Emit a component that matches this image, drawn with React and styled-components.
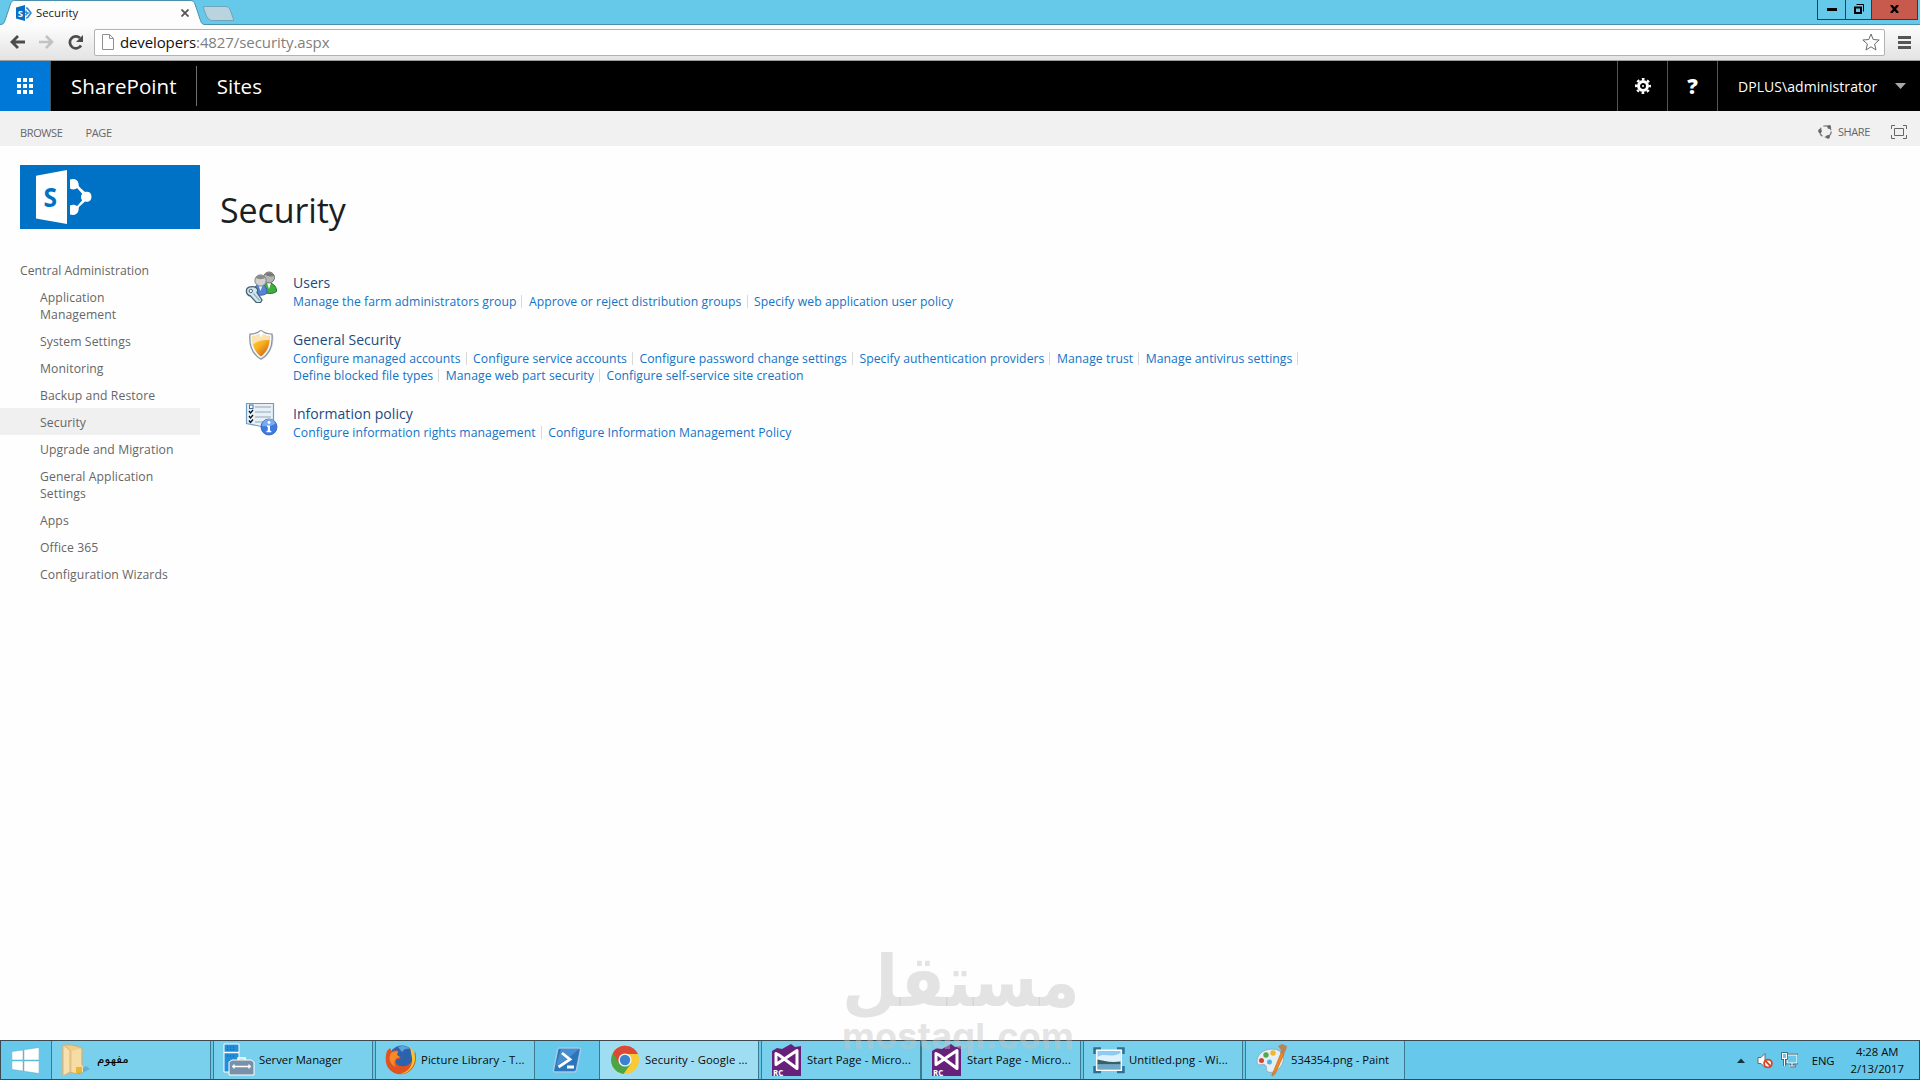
import React from "react";
import styled, { createGlobalStyle } from "styled-components";

const Global = createGlobalStyle`
  *, *::before, *::after { box-sizing: border-box; }
  body { margin: 0; overflow: hidden; background: #fefefe; }
  svg { display: block; flex: none; }
`;

const Screen = styled.div`
  display: flex;
  flex-direction: column;
  width: 1920px;
  height: 1080px;
  font-family: "Open Sans", "Noto Sans", sans-serif;
  white-space: nowrap;
`;

/* ---------- browser chrome ---------- */
const TitleBar = styled.header`
  display: flex;
  height: 25px;
  background: linear-gradient(#67c9ea 0 24px, #4b90ac 24px);
`;
const Tab = styled.div`
  display: grid;
  width: 205px;
  height: 25px;
  > * { grid-area: 1 / 1; }
`;
const TabContent = styled.div`
  display: flex;
  align-items: center;
  padding: 0 16px 0 16px;
`;
const TabTitle = styled.span`
  flex: 1;
  margin-left: 4px;
  padding-bottom: 1px;
  font-size: 11.3px;
  letter-spacing: 0.02px;
  color: #1a1a1a;
`;
const NewTab = styled.div`
  width: 27px;
  height: 15px;
  margin: 5.5px 0 0 0;
  border: 1px solid #6fa3b8;
  border-radius: 2px 4px 2px 5px;
  background: #b9d3df;
  transform: skewX(20deg);
`;
const WindowButtons = styled.div`
  display: flex;
  height: 20px;
  margin: 0 2px 0 auto;
  border: 1px solid #20414d;
  border-top: 0;
`;
const WindowButton = styled.div`
  display: flex;
  align-items: center;
  justify-content: center;
  width: ${(p) => p.$w}px;
  padding-bottom: 1px;
  background: ${(p) => (p.$close ? "#c75a4c" : "transparent")};
  & + & { border-left: 1px solid #20414d; }
`;
const Toolbar = styled.div`
  display: flex;
  align-items: center;
  height: 36px;
  padding: 0 9px 1px 10px;
  background: linear-gradient(#fdfdfd, #e3e3e3);
  border-bottom: 1px solid #9d9d9d;
`;
const NavIcons = styled.div`
  display: flex;
  gap: 14px;
  width: 84px;
`;
const AddressBar = styled.div`
  display: flex;
  align-items: center;
  flex: 1;
  height: 27px;
  margin-right: 13px;
  padding: 0 4px 0 7px;
  background: #fff;
  border: 1px solid #b2b2b2;
  border-radius: 2px;
  font-size: 15px;
`;
const Host = styled.span`
  margin-left: 6px;
  letter-spacing: -0.12px;
  color: #111;
`;
const Path = styled.span`
  flex: 1;
  letter-spacing: -0.08px;
  color: #808080;
`;

/* ---------- suite bar and ribbon ---------- */
const SuiteBar = styled.div`
  display: flex;
  align-items: center;
  height: 50px;
  background: #000;
  color: #fff;
`;
const Launcher = styled.div`
  display: grid;
  place-content: center;
  grid-template-columns: repeat(3, 4px);
  grid-auto-rows: 4px;
  gap: 2px;
  width: 51px;
  height: 50px;
  border-right: 1px solid #3f5568;
  background: #0078d7;
`;
const Dot = styled.i`
  background: #fff;
`;
const SuiteName = styled.span`
  padding: 0 19px 0 20px;
  font-size: 20.5px;
  letter-spacing: 0.08px;
`;
const SuiteDivider = styled.div`
  width: 1px;
  height: 40px;
  background: #6f6f6f;
`;
const SuiteActions = styled.div`
  display: flex;
  height: 50px;
  margin-left: auto;
`;
const SuiteAction = styled.div`
  display: flex;
  align-items: center;
  justify-content: center;
  width: 50px;
  padding-bottom: 1px;
  border-left: 1px solid #555;
  font-size: 21px;
  font-weight: 800;
`;
const Account = styled.div`
  display: flex;
  align-items: center;
  justify-content: space-between;
  width: 203px;
  padding: 0 14px 0 20px;
  border-left: 1px solid #555;
  font-size: 14px;
  letter-spacing: 0.06px;
`;
const Ribbon = styled.div`
  display: flex;
  height: 35px;
  padding: 14px 13px 0 20px;
  background: #f1f1f1;
  color: #666;
  font-size: 11px;
  line-height: 15px;
  letter-spacing: -0.38px;
`;
const RibbonTab = styled.span`
  margin-right: 23px;
`;
const RibbonActions = styled.div`
  display: flex;
  align-items: center;
  height: 15px;
  margin: -1px 0 0 auto;
`;
const ShareLabel = styled.span`
  margin: 0 21px 0 5px;
`;

/* ---------- page ---------- */
const Body = styled.div`
  display: flex;
  flex: 1;
  padding-top: 19px;
`;
const Side = styled.aside`
  width: 200px;
`;
const SiteLogo = styled.div`
  width: 180px;
  height: 64px;
  margin-left: 20px;
  background: #0072c6;
`;
const Nav = styled.nav`
  display: flex;
  flex-direction: column;
  margin-top: 27px;
`;
const NavItem = styled.a`
  padding: 6px 20px 4px ${(p) => (p.$root ? 20 : 40)}px;
  background: ${(p) => (p.$active ? "#f0f0f0" : "transparent")};
  font-size: 12.2px;
  line-height: 17px;
  letter-spacing: ${(p) => (p.$root ? 0.02 : 0.09)}px;
  color: #666;
  white-space: normal;
`;
const Main = styled.main`
  padding: 22px 0 0 20px;
`;
const Title = styled.h1`
  margin: 0 0 40px;
  font-size: 34px;
  font-weight: 400;
  line-height: 46px;
  letter-spacing: -0.1px;
  color: #1b1f24;
`;
const Section = styled.section`
  display: flex;
  gap: 15px;
  margin-bottom: 20px;
  padding-left: 25px;
`;
const SectionIcon = styled.div`
  height: 32px;
  margin-top: -2px;
`;
const SectionTitle = styled.h2`
  margin: 0;
  font-size: 14px;
  font-weight: 400;
  line-height: 20px;
  letter-spacing: 0.04px;
  color: #1a4a80;
`;
const LinkRow = styled.div`
  display: flex;
  height: 17px;
`;
const Link = styled.a`
  display: flex;
  align-items: center;
  font-size: 12.2px;
  line-height: 17px;
  letter-spacing: 0.06px;
  color: #1373c8;
`;
const Separator = styled.i`
  width: 1px;
  height: 13px;
  margin: 0 6.5px 0 5px;
  background: #d9d9d9;
`;

/* ---------- taskbar ---------- */
const Taskbar = styled.footer`
  display: flex;
  height: 40px;
  background: #66c8ea;
  border: 1px solid #3c4a50;
`;
const Start = styled.div`
  display: flex;
  align-items: center;
  width: 50px;
  padding-left: 11px;
`;
const Task = styled.div`
  display: flex;
  align-items: center;
  gap: 4px;
  width: ${(p) => p.$w || 160}px;
  margin-right: ${(p) => p.$gap || 0}px;
  padding-left: ${(p) => (p.$plain ? 16 : 9)}px;
  background: ${(p) => (p.$plain ? "transparent" : p.$active ? "#9fddf3" : "#78d0ec")};
  border: solid #3d7a90;
  border-width: 0 ${(p) => (p.$plain ? 0 : 1)}px;
`;
const TaskLabel = styled.span`
  padding-bottom: 2px;
  font-size: 11.3px;
  letter-spacing: ${(p) => p.$track ?? 0.1}px;
  color: #0a0a0a;
`;
const ArabicLabel = styled.span`
  padding-bottom: 2px;
  font: 12px "DejaVu Sans", sans-serif;
`;
const Tray = styled.div`
  display: flex;
  align-items: center;
  margin-left: auto;
  padding-right: 15px;
  font-size: 11.3px;
  color: #0a0a0a;
`;
const TrayIcon = styled.div`
  margin-right: ${(p) => p.$gap}px;
`;
const Language = styled.span`
  margin-right: 16px;
  letter-spacing: -0.1px;
`;
const Clock = styled.div`
  line-height: 17px;
  text-align: center;
`;

const Watermark = styled.div`
  position: absolute;
  left: 842px;
  top: 938px;
  width: 232px;
  color: rgba(195, 195, 195, 0.45);
  pointer-events: none;
  text-align: center;
`;
const WatermarkArabic = styled.div`
  height: 76px;
  font: bold 65px/86px "DejaVu Sans", sans-serif;
  transform: scaleY(1.1);
`;
const WatermarkLatin = styled.div`
  font: bold 36px/44px Inter, sans-serif;
  letter-spacing: 0.2px;
`;

/* ---------- drawings ---------- */
const PageGlyph = () => (
  <svg width="16" height="16" viewBox="0 0 16 16">
    <path d="M0 2.500 9 0v16l-9-2.500z" fill="#0a6fc2" />
    <path d="M10 3a2 2 0 0 1 2 1l3 4-3 4a2 2 0 0 1-2 1M10 5.500v2l2 .5-2 1.500v1" fill="none" stroke="#2a86cf" strokeWidth="1.500" />
    <text x="1.800" y="11.600" fontSize="9.500" fontWeight="700" fill="#fff">S</text>
  </svg>
);

const SharePointMark = () => (
  <svg width="180" height="64" viewBox="0 0 180 64">
    <path d="M16 10.700 47 5v54l-31-5.500z" fill="#fff" />
    <text x="23.500" y="41.500" fontSize="27" fontWeight="700" fill="#0072c6" textLength="13.500" lengthAdjust="spacingAndGlyphs">S</text>
    <path d="M50 14.500c4-1.500 8 0 8.500 4 .2 1.500 0 2.500 1.500 4l5 4.500c4-1 6.500 1 6.500 4.700s-3 6-6.500 4.700l-5.500 5c-1 1-.7 2.400-1 4-.9 4-4.500 5.300-8.500 4v-9c3-1.200 5.500-.8 7 .8l5-5.700c-1.300-2.200-1.200-5 0-7l-5-5.500c-2 1.800-4.500 1.800-7 .5z" fill="#fff" />
    <path d="M50 24.800c2.500 1.200 5 .9 7-.8l4.500 5c-1 2.200-1 4.400 0 6.400L57.200 40c-1.700-1.600-4.200-2-7.200-1" fill="#0072c6" />
  </svg>
);

const UsersIcon = () => (
  <svg width="33" height="32" viewBox="0 0 33 32">
    <path d="M17 20c1-6 4-8 7-8 5 0 8 5 7.500 8.500-3 2.500-10 3-14.500-.5z" fill="#3fae3b" stroke="#1f6f2b" />
    <path d="m22 12 2 6 2-6z" fill="#fff" />
    <circle cx="24" cy="6.500" r="5.500" fill="#b5b5b5" stroke="#707070" />
    <path d="M20 4c2-3 7-3 9 1-3 1-6 0-9-1z" fill="#777" />
    <path d="M9 22c0-7 3-9 6.500-9s6.500 3 6.500 9c-3 3-10 3-13 0z" fill="#5584d6" stroke="#3a60a8" />
    <path d="m13 13 2.500 7 2.500-7z" fill="#eaf2fb" />
    <circle cx="15.500" cy="9.500" r="5.600" fill="#d2d2d2" stroke="#808080" />
    <path d="M10.500 7c2-4 8-4 10 0-3 1.500-7 1.500-10 0z" fill="#8b8b8b" />
    <path d="M2 17.500c2-2.500 8-2.500 10 0 1 1.500.8 3 0 4l5 7.500-1.500 2.500-4 .2L5.500 25C2 24.500.5 21 2 17.500z" fill="#cfe5f2" stroke="#47616f" strokeWidth="1.300" />
    <path d="m8.500 22.500 6 7" stroke="#8fb0c2" strokeWidth="1.200" />
    <circle cx="5.800" cy="20" r="1.700" fill="#fff" stroke="#47616f" />
  </svg>
);

const ShieldIcon = () => (
  <svg width="33" height="32" viewBox="0 0 33 32">
    <defs>
      <linearGradient id="gold" x1="0" y1="0" x2=".7" y2="1">
        <stop offset="0" stopColor="#ffd23f" />
        <stop offset=".55" stopColor="#f8b21e" />
        <stop offset="1" stopColor="#d4661a" />
      </linearGradient>
    </defs>
    <path d="M17 4c3 2.500 7 3 11.500 3.500.8 10-2 18-11 24.500" fill="#ddd" opacity=".7" />
    <path d="M16 2.500c3.200 2.400 6.800 3.400 11 3.600C28 16 25 26 16 31.300 7 26 4 16 5 6.100c4.200-.2 7.800-1.200 11-3.600z" fill="#f4f6f8" stroke="#8795a3" strokeWidth="1.300" />
    <path d="M16 5.500c3 1.800 5.500 2.700 8.700 3C25 17 22.500 24 16 28.500 9.500 24 7 17 7.300 8.500c3-.3 5.700-1.200 8.700-3z" fill="url(#gold)" />
    <path d="M16 5.500c3 1.800 5.500 2.700 8.700 3v3.800c-6-1-12 .5-17.200 4.500C7.300 13 7.200 10 7.300 8.500c3-.3 5.700-1.200 8.700-3z" fill="#fbe3b5" />
    <path d="m13.800 4.500 2.200 5 2.200-5L16 3z" fill="#fff" />
  </svg>
);

const PolicyIcon = () => (
  <svg width="33" height="34" viewBox="0 0 33 34">
    <path d="M1.500 1.500h27V26L14 24 1.500 21.500z" fill="#e6f0f8" stroke="#6f9dcb" strokeWidth="1.200" />
    <path d="M10 5h16M10 10h16M10 15h16M10 20h9" stroke="#b3bec6" strokeWidth="1.300" />
    <rect x="4.500" y="3" width="3.500" height="3.500" fill="#fff" stroke="#3c6f9f" />
    <path d="m4 9 1.500 2L8 8M4 14l1.500 2L8 13M4 18.500l1.500 2 2.500-3" fill="none" stroke="#111" strokeWidth="1.300" />
    <circle cx="24" cy="25" r="8" fill="#3d7be0" stroke="#2c5fb8" strokeWidth=".8" />
    <path d="M17 24a7 7 0 0 1 13.500-2.500c-4 3-9 3-13.500 2.500z" fill="#7aa9ef" />
    <circle cx="24" cy="20.500" r="1.400" fill="#fff" />
    <path d="M22 23.500h3v5.300h1.300v1.400h-4.800v-1.400h1.300V25H22z" fill="#fff" />
  </svg>
);

const VisualStudio = () => (
  <svg width="32" height="34" viewBox="0 0 32 34">
    <path d="M1 8l5-3 5 1 9-5 4 3 6-1v30H1z" fill="#68217a" />
    <path d="M5 10.500v11L26 7.500v18L8 12z" fill="none" stroke="#fff" strokeWidth="3" strokeLinejoin="round" />
    <text x="2" y="33" fontSize="8" fontWeight="700" fill="#fff">RC</text>
  </svg>
);

const icons = {
  folder: (
    <svg width="32" height="34" viewBox="0 0 32 34">
      <path d="M14 31l11-8 4 3-10 5z" fill="#4d9fc0" opacity=".6" />
      <path d="M2 2h9l10 3v22l-5 4-8-2-6 3z" fill="#f0cf8d" stroke="#d9ad63" />
      <path d="M2 2l7 5v22l-7 4z" fill="#f8dfae" stroke="#dcb575" />
      <path d="M11 8l9-2v15l2 3v5l-5 1-6-1z" fill="#f6dda6" />
      <path d="M15 24h6v6h-6z" fill="#e8b73a" />
    </svg>
  ),
  server: (
    <svg width="32" height="34" viewBox="0 0 32 34">
      <path d="M1 1h15v28H1z" fill="#1f8fdc" stroke="#fff" />
      <path d="M1 9.500h15" stroke="#fff" strokeWidth="1.500" />
      <path d="M4 4h9M4 6.500h9M4 13h9" stroke="#0d5a9c" strokeDasharray="1 2" />
      <path d="M15 17v-2h7v2" fill="none" stroke="#fff" strokeWidth="1.500" />
      <path d="M6 19l3-2h19l3 2v13H6z" fill="#7890a8" stroke="#fff" />
      <path d="M9 23.500h19M11 21.500v4M26 21.500v4" stroke="#fff" strokeWidth="1.500" />
    </svg>
  ),
  firefox: (
    <svg width="32" height="32" viewBox="0 0 32 32">
      <circle cx="17" cy="14.500" r="13" fill="#2d62ad" />
      <path d="M13 3c5-2 9-1 12 2-4-1-6 0-8 3z" fill="#5ba4dc" />
      <path d="M2 7c-2 6-2 13 2 18 6 7 17 7 23 0 4-5 5-11 3-18-1 8-4 14-10 15-6 1-10-2-9-6l5-2-4-3 1-4C9 6 8 7 7 8L5 4z" fill="#e0521f" />
      <path d="M25 3c5 4 7 12 3 19-3 5-8 8-13 8 8-2 13-8 12-16z" fill="#f9c22e" />
      <path d="M7 8c-2 2-3 5-2 9 1 3 3 5 6 6-3-4-1-8 1-9l3-1-3-2 1-4z" fill="#f58a2c" />
    </svg>
  ),
  powershell: (
    <svg width="32" height="28" viewBox="0 0 32 28">
      <path d="M8 2h20q2 0 1.500 2l-4 20q-.5 2-2.500 2H4q-2 0-1.500-2l4-20Q7 2 8 2z" fill="#2a76bd" stroke="#a5c9e4" strokeWidth="1.500" />
      <path d="M10 3h18L15 14 5 20z" fill="#5ba0d8" opacity=".6" />
      <path d="m11 7 8 6.500L7.500 21M16 21h7" fill="none" stroke="#fff" strokeWidth="2.800" />
    </svg>
  ),
  chrome: (
    <svg width="32" height="32" viewBox="0 0 32 32">
      <circle cx="16" cy="16" r="14" fill="#fbc931" />
      <path d="M16 16 3.900 9A14 14 0 0 0 14.500 29.900L22 19.500z" fill="#4aa546" />
      <path d="M16 16 5 7.300A14 14 0 0 1 28.800 10H16z" fill="#db4a37" />
      <path d="M3.900 9 10 19l6-9h12.800A14 14 0 0 0 5 7.300z" fill="#db4a37" />
      <circle cx="16" cy="16" r="6.600" fill="#f2f2f2" />
      <circle cx="16" cy="16" r="5.200" fill="#3a83d0" />
    </svg>
  ),
  vs: <VisualStudio />,
  picture: (
    <svg width="32" height="28" viewBox="0 0 32 28">
      <path d="M1.500 8V2.500H8M24 2.500h6.500V8M30.500 20v6H24M8 26H1.500v-6" fill="none" stroke="#2f6f94" strokeWidth="2.500" />
      <path d="M3 3.500h26v21.500H3z" fill="#fff" />
      <path d="M4.500 5h23v18.500h-23z" fill="#8ccbf2" />
      <path d="M4.500 11c7-5 13 2 23-4v10h-23z" fill="#dff2fb" />
      <path d="M4.500 13.500c6 1 12 3.500 23 2v3h-23z" fill="#38606a" />
      <path d="M4.500 18.500h23v5h-23z" fill="#6fa9c6" />
    </svg>
  ),
  paint: (
    <svg width="32" height="34" viewBox="0 0 32 34">
      <path d="M2 20C1 12 8 6 17 6s13 6 11 13-10 12-15 10c-3-2 0-5-3-7s-6 2-8-2z" fill="#e3eef5" stroke="#91aebf" />
      <circle cx="6.500" cy="17.500" r="2.500" fill="#d8452f" />
      <circle cx="11" cy="12" r="2.700" fill="#52a949" />
      <circle cx="18" cy="10" r="2.700" fill="#f2b52c" />
      <circle cx="14.500" cy="19" r="2.500" fill="#4fb4dd" />
      <path d="M17 32l9-22 3 1-9 20-3 2z" fill="#ef8a22" stroke="#c3661a" strokeWidth=".7" />
      <path d="M25 10l1-3-3-4 4-2 5 2-1 4-2 4z" fill="#b98454" />
    </svg>
  ),
};

const nav = [
  "Application Management", "System Settings", "Monitoring", "Backup and Restore", "Security",
  "Upgrade and Migration", "General Application Settings", "Apps", "Office 365", "Configuration Wizards",
];

const sections = [
  {
    title: "Users",
    icon: <UsersIcon />,
    rows: [["Manage the farm administrators group", "Approve or reject distribution groups", "Specify web application user policy"]],
  },
  {
    title: "General Security",
    icon: <ShieldIcon />,
    rows: [
      ["Configure managed accounts", "Configure service accounts", "Configure password change settings", "Specify authentication providers", "Manage trust", "Manage antivirus settings"],
      ["Define blocked file types", "Manage web part security", "Configure self-service site creation"],
    ],
  },
  {
    title: "Information policy",
    icon: <PolicyIcon />,
    rows: [["Configure information rights management", "Configure Information Management Policy"]],
  },
];

const tasks = [
  { icon: "folder", arabic: "مفهوم", gap: 2 },
  { icon: "server", label: "Server Manager", gap: 2, track: 0 },
  { icon: "firefox", label: "Picture Library - T..." },
  { icon: "powershell", w: 64, plain: true },
  { icon: "chrome", label: "Security - Google ...", active: true, gap: 2 },
  { icon: "vs", label: "Start Page - Micro..." },
  { icon: "vs", label: "Start Page - Micro...", gap: 2 },
  { icon: "picture", label: "Untitled.png - Wi...", gap: 2 },
  { icon: "paint", label: "534354.png - Paint", track: 0 },
];

export default function App() {
  return (
    <Screen>
      <Global />
      <TitleBar>
        <Tab>
          <svg width="205" height="25" viewBox="0 0 205 25">
            <path d="M0 24.500c3 0 4-1 5-4L10.500 4c1-2.500 2-3.500 4-3.500H190c3 0 4 1 5 3.500l5.500 16.500c1 3 2 4 4.500 4v1H0z" fill="#fdfdfd" stroke="#4b90ac" />
          </svg>
          <TabContent>
            <PageGlyph />
            <TabTitle>Security</TabTitle>
            <svg width="8" height="8" viewBox="0 0 8 8"><path d="m.5.500 7 7M7.500.500l-7 7" stroke="#555" strokeWidth="1.800" /></svg>
          </TabContent>
        </Tab>
        <NewTab />
        <WindowButtons>
          <WindowButton $w={27}>
            <svg width="10" height="4" viewBox="0 0 10 4"><path d="M0 2.500h10" stroke="#000" strokeWidth="3" /></svg>
          </WindowButton>
          <WindowButton $w={26}>
            <svg width="10" height="10" viewBox="0 0 10 10"><path d="M1 3.500h6v5.500H1z" fill="none" stroke="#000" strokeWidth="2" /><path d="M2.500.5h7v7" fill="none" stroke="#000" /></svg>
          </WindowButton>
          <WindowButton $w={46} $close>
            <svg width="9" height="8" viewBox="0 0 9 8"><path d="m1 0 7 8M8 0 1 8" stroke="#000" strokeWidth="2.400" /></svg>
          </WindowButton>
        </WindowButtons>
      </TitleBar>
      <Toolbar>
        <NavIcons>
          <svg width="15" height="14" viewBox="0 0 15 14"><path d="M15 7H2M8 1 2 7l6 6" fill="none" stroke="#4c4c4c" strokeWidth="2.800" /></svg>
          <svg width="15" height="14" viewBox="0 0 15 14"><path d="M0 7h13M7 1l6 6-6 6" fill="none" stroke="#c2c2c2" strokeWidth="2.600" /></svg>
          <svg width="16" height="15" viewBox="0 0 16 15"><path d="M13 10.500A6 6 0 1 1 12 3" fill="none" stroke="#4c4c4c" strokeWidth="2.700" /><path d="M15 0v7H8z" fill="#4c4c4c" /></svg>
        </NavIcons>
        <AddressBar>
          <svg width="12" height="16" viewBox="0 0 12 16"><path d="M.5.500h7l4 4v11H.5zM7.500.500v4h4" fill="#fff" stroke="#8f8f8f" /></svg>
          <Host>developers</Host>
          <Path>:4827/security.aspx</Path>
          <svg width="18" height="18" viewBox="0 0 18 18"><path d="m9 1 2.200 5.500 6 .5-4.600 4 1.400 6L9 13.800 4 17l1.400-6L.8 7l6-.5z" fill="#fff" stroke="#6b6b6b" /></svg>
        </AddressBar>
        <svg width="13" height="13" viewBox="0 0 13 13"><path d="M0 1.500h13M0 6.500h13M0 11.500h13" stroke="#555" strokeWidth="3" /></svg>
      </Toolbar>

      <SuiteBar>
        <Launcher>{Array.from({ length: 9 }, (_, i) => <Dot key={i} />)}</Launcher>
        <SuiteName>SharePoint</SuiteName>
        <SuiteDivider />
        <SuiteName>Sites</SuiteName>
        <SuiteActions>
          <SuiteAction>
            <svg width="16" height="16" viewBox="0 0 16 16">
              <circle cx="8" cy="8" r="4.500" fill="none" stroke="#fff" strokeWidth="3" />
              <circle cx="8" cy="8" r="6.900" fill="none" stroke="#fff" strokeWidth="2.200" strokeDasharray="2.710 2.710" strokeDashoffset="1.350" />
              <circle cx="8" cy="8" r="1" fill="#fff" />
            </svg>
          </SuiteAction>
          <SuiteAction>?</SuiteAction>
          <Account>
            DPLUS\administrator
            <svg width="11" height="6" viewBox="0 0 11 6"><path d="M0 0h11L5.500 6z" fill="#a8a8a8" /></svg>
          </Account>
        </SuiteActions>
      </SuiteBar>
      <Ribbon>
        <RibbonTab>BROWSE</RibbonTab>
        <RibbonTab>PAGE</RibbonTab>
        <RibbonActions>
          <svg width="15" height="15" viewBox="0 0 15 15">
            <circle cx="7.500" cy="7.500" r="5.700" fill="none" stroke="#777" strokeWidth="1.300" strokeDasharray="9.500 2.440" />
            <circle cx="2" cy="7" r="1.900" fill="#666" /><circle cx="11.200" cy="3" r="1.900" fill="#666" /><circle cx="10" cy="12.800" r="1.900" fill="#666" />
          </svg>
          <ShareLabel>SHARE</ShareLabel>
          <svg width="16" height="14" viewBox="0 0 16 14"><path d="M.5 4V.5H4M12 .5h3.500V4M15.500 10v3.500H12M4 13.500H.5V10M3.500 3.500h9v7h-9z" fill="none" stroke="#666" /></svg>
        </RibbonActions>
      </Ribbon>

      <Body>
        <Side>
          <SiteLogo><SharePointMark /></SiteLogo>
          <Nav>
            <NavItem $root>Central Administration</NavItem>
            {nav.map((n) => <NavItem key={n} $active={n === "Security"}>{n}</NavItem>)}
          </Nav>
        </Side>
        <Main>
          <Title>Security</Title>
          {sections.map((s) => (
            <Section key={s.title}>
              <SectionIcon>{s.icon}</SectionIcon>
              <div>
                <SectionTitle>{s.title}</SectionTitle>
                {s.rows.map((row, r) => (
                  <LinkRow key={r}>
                    {row.map((l, i) => (
                      <Link key={l}>
                        {l}
                        {(i < row.length - 1 || r < s.rows.length - 1) && <Separator />}
                      </Link>
                    ))}
                  </LinkRow>
                ))}
              </div>
            </Section>
          ))}
        </Main>
      </Body>

      <Taskbar>
        <Start>
          <svg width="27" height="27" viewBox="0 0 27 27"><path d="M0 4.500 11 3v10H0zM12 2.800 27 .5V13H12zM0 14h11v10L0 22.500zM12 14h15v12.500l-15-2.300z" fill="#fff" stroke="#4d9cb9" strokeWidth=".4" /></svg>
        </Start>
        {tasks.map((t, i) => (
          <Task key={i} $w={t.w} $gap={t.gap} $plain={t.plain} $active={t.active}>
            {icons[t.icon]}
            {t.label && <TaskLabel $track={t.track}>{t.label}</TaskLabel>}
            {t.arabic && <ArabicLabel lang="ar">{t.arabic}</ArabicLabel>}
          </Task>
        ))}
        <Tray>
          <TrayIcon $gap={12}>
            <svg width="8" height="5" viewBox="0 0 8 5"><path d="M0 5h8L4 .5z" fill="#16323c" /></svg>
          </TrayIcon>
          <TrayIcon $gap={8}>
            <svg width="16" height="17" viewBox="0 0 16 17">
              <path d="M1 5.500h3L8 1.500v14l-4-4H1z" fill="#fff" stroke="#6b6b6b" />
              <circle cx="11" cy="11.500" r="3.900" fill="#fff" stroke="#d8452a" strokeWidth="1.800" />
              <path d="m8.500 9 5 5" stroke="#d8452a" strokeWidth="1.800" />
            </svg>
          </TrayIcon>
          <TrayIcon $gap={14}>
            <svg width="17" height="16" viewBox="0 0 17 16">
              <path d="M6 3h10v8H6zM9 14h6M11 11v3" fill="#69c8e9" stroke="#2e5566" strokeWidth="2.600" />
              <path d="M6 3h10v8H6zM8.500 14h6M11 11v3" fill="#69c8e9" stroke="#fff" strokeWidth="1.100" />
              <path d="M1.500 1.500h4v5h-4zM3.500 6.500V14" fill="#69c8e9" stroke="#2e5566" strokeWidth="2.600" />
              <path d="M1.500 1.500h4v5h-4zM3.500 6.500V14" fill="#69c8e9" stroke="#fff" strokeWidth="1.100" />
            </svg>
          </TrayIcon>
          <Language>ENG</Language>
          <Clock>4:28 AM<br />2/13/2017</Clock>
        </Tray>
      </Taskbar>

      <Watermark>
        <WatermarkArabic lang="ar">مستقل</WatermarkArabic>
        <WatermarkLatin>mostaql.com</WatermarkLatin>
      </Watermark>
    </Screen>
  );
}
